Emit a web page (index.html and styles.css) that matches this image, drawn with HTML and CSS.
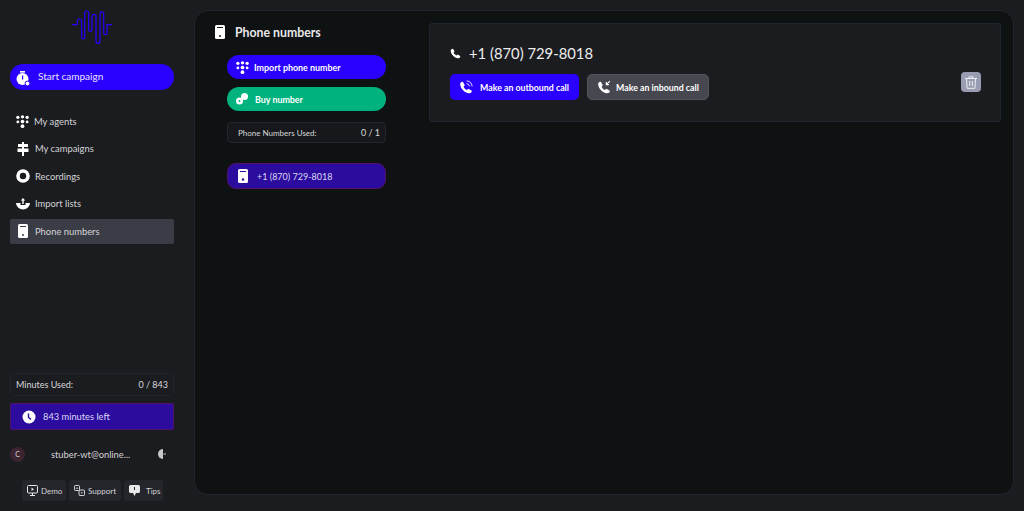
FILE: index.html
```html
<!DOCTYPE html>
<html lang="en">

<head>
    <meta charset="UTF-8">
    <title>Phone numbers</title>
    <link rel="stylesheet" href="styles.css">
</head>

<body>
    <aside class="sidebar">
        <div class="logo">
            <svg width="40" height="36" viewBox="0 0 40 36" fill="none" stroke="#2a00ff" stroke-width="1.2">
                <path d="M0 14.700H5.300V11.200a2.200 2.200 0 0 1 4.400 0V27.300a1.500 1.500 0 0 0 3 0V3a2 2 0 0 1 4 0V19.700a1.650 1.650 0 0 0 3.300 0V6.300a2 2 0 0 1 4 0V31.300a2 2 0 0 0 4 0V3.700a1.850 1.850 0 0 1 3.700 0V23a1.650 1.650 0 0 0 3.300 0V14.700H40"/>
            </svg>
        </div>

        <button class="start-btn">
            <svg width="14" height="15" viewBox="0 0 14 15" fill="#fff"><rect x="4" y="0" width="5" height="1.600"/><circle cx="6.500" cy="8" r="6"/><path d="M6 4.500h1.200v4H6z" fill="#2a00ff"/><circle cx="11.500" cy="12.500" r="2.400" stroke="#2a00ff"/></svg>
            <span>Start campaign</span>
        </button>

        <nav class="nav">
            <a class="nav-item">
                <svg width="13" height="13" viewBox="0 0 14 14" fill="#fff"><circle cx="2" cy="2.500" r="1.800"/><circle cx="7" cy="2" r="1.800"/><circle cx="12" cy="2.500" r="1.800"/><circle cx="2" cy="7.500" r="1.500"/><circle cx="7" cy="7" r="2"/><circle cx="12" cy="7.500" r="1.500"/><circle cx="7" cy="12" r="2"/></svg>
                <span>My agents</span>
            </a>
            <a class="nav-item">
                <svg width="14" height="14" viewBox="0 0 14 14" fill="#fff"><path d="M6 0h2v2h4v3H8v1.500h4.500v3.500H8v4H6v-4H1.500V6.500H6V5H2V2h4z"/></svg>
                <span>My campaigns</span>
            </a>
            <a class="nav-item">
                <svg width="14" height="14" viewBox="0 0 14 14" fill="none" stroke="#fff" stroke-width="3.600"><circle cx="7" cy="7" r="5"/></svg>
                <span>Recordings</span>
            </a>
            <a class="nav-item">
                <svg width="14" height="14" viewBox="0 0 14 14" fill="#fff"><path d="M0 6h4.500v2h5V6H14a7 6.500 0 0 1-14 0z"/><path d="M7 1 4.800 3.500H6.300V7h1.400V3.500h1.500z"/></svg>
                <span>Import lists</span>
            </a>
            <a class="nav-item active">
                <svg width="14" height="14" viewBox="0 0 14 14"><rect x="2" y="0" width="10" height="14" rx="1.500" fill="#fff"/><rect x="4" y="2" width="6" height="1" fill="#3a3c46"/><circle cx="7" cy="11" r="1" fill="#3a3c46"/></svg>
                <span>Phone numbers</span>
            </a>
        </nav>

        <div class="side-bottom">
            <div class="used-box">
                <span>Minutes Used:</span>
                <span>0 / 843</span>
            </div>
            <div class="left-box">
                <svg width="14" height="14" viewBox="0 0 14 14"><circle cx="7" cy="7" r="6.500" fill="#fff"/><path d="M6.500 3.500V7.500L9 9.500" fill="none" stroke="#2b0c9e" stroke-width="1.400"/></svg>
                <span>843 minutes left</span>
            </div>
            <div class="user-row">
                <span class="avatar">C</span>
                <span class="email">stuber-wt@online...</span>
                <svg width="8" height="10" viewBox="0 0 8 10" fill="#c8c8cc"><path d="M5 0v10A5 5 0 0 1 5 0z"/><rect x="5.500" y="4.500" width="2.500" height="1"/></svg>
            </div>
            <div class="help-row">
                <a class="help-btn help-demo">
                    <svg width="11" height="11" viewBox="0 0 11 11" fill="none" stroke="#e8e8e8"><rect x=".5" y=".5" width="10" height="7.500" rx="1"/><path d="M3 10.500h5M5.500 8v2.500"/><path d="M4.500 2.500l2.500 1.700-2.500 1.700z" fill="#e8e8e8" stroke="none"/></svg>
                    <span>Demo</span>
                </a>
                <a class="help-btn help-support">
                    <svg width="11" height="11" viewBox="0 0 12 12" fill="none" stroke="#e8e8e8"><rect x=".5" y=".5" width="5.500" height="5.500" rx="1"/><rect x="5.500" y="5.500" width="6" height="6" rx="1"/><path d="M7.500 8.500h2M2 3.500h2.500"/></svg>
                    <span>Support</span>
                </a>
                <a class="help-btn help-tips">
                    <svg width="11" height="11" viewBox="0 0 11 11" fill="#e8e8e8"><path d="M1.500 0h8A1.500 1.500 0 0 1 11 1.500v5A1.500 1.500 0 0 1 9.500 8H7l-1.500 3L4 8H1.500A1.500 1.500 0 0 1 0 6.500v-5A1.500 1.500 0 0 1 1.500 0z"/><rect x="5" y="2" width="1" height="3" fill="#25262b"/></svg>
                    <span>Tips</span>
                </a>
            </div>
        </div>
    </aside>

    <main class="panel">
        <section class="numbers">
            <h1 class="numbers-title">
                <svg width="12" height="14" viewBox="0 0 12 14"><rect x="1" y="0" width="10" height="14" rx="1.500" fill="#fff"/><rect x="3" y="2" width="6" height="1" fill="#101213"/><circle cx="6" cy="11" r="1" fill="#101213"/></svg>
                <span>Phone numbers</span>
            </h1>
            <div class="numbers-list">
                <button class="pill pill-blue">
                    <svg width="13" height="13" viewBox="0 0 14 14" fill="#fff"><circle cx="2" cy="2.500" r="1.800"/><circle cx="7" cy="2" r="1.800"/><circle cx="12" cy="2.500" r="1.800"/><circle cx="2" cy="7.500" r="1.500"/><circle cx="7" cy="7" r="2"/><circle cx="12" cy="7.500" r="1.500"/><circle cx="7" cy="12" r="2"/></svg>
                    <span>Import phone number</span>
                </button>
                <button class="pill pill-green">
                    <svg width="12" height="12" viewBox="0 0 12 12" fill="#fff"><circle cx="3.500" cy="8" r="3.500"/><circle cx="8.500" cy="3.500" r="3.500"/><circle cx="3.500" cy="8" r="1" fill="#00b37e"/></svg>
                    <span>Buy number</span>
                </button>
                <div class="numbers-used">
                    <span>Phone Numbers Used:</span>
                    <span class="numbers-count">0 / 1</span>
                </div>
                <a class="number-item">
                    <svg width="12" height="14" viewBox="0 0 12 14"><rect x="1" y="0" width="10" height="14" rx="1.500" fill="#fff"/><rect x="3" y="2" width="6" height="1" fill="#2b0c9e"/><circle cx="6" cy="10.500" r="1.200" fill="#2b0c9e"/></svg>
                    <span>+1 (870) 729-8018</span>
                </a>
            </div>
        </section>

        <section class="detail">
            <div class="detail-main">
                <h2 class="detail-number">
                    <svg width="11" height="11" viewBox="0 0 24 24" fill="#fff"><path d="M6.600 1.500 10 7.500 7.800 10c1.200 2.700 3.500 5 6.200 6.200l2.500-2.200 6 3.400c.3 2.600-2 5.600-5 5.100C9.500 21.500 2.500 14.500 1.500 6.500 1 3.500 4 1.200 6.600 1.500z"/></svg>
                    <span>+1 (870) 729-8018</span>
                </h2>
                <div class="detail-actions">
                    <button class="call-btn call-out">
                        <svg width="14" height="14" viewBox="0 0 24 24" fill="#fff"><path d="M6.600 3 10 9 7.800 11.500c1.200 2.700 3 4.500 5.700 5.700L16 15l6 3.400c.3 2.600-2 4.600-5 4.100C9.500 21.500 3 15 2 7.500 1.500 4.500 4 2.700 6.600 3z"/><path d="M13 6a6 6 0 0 1 5 5M13 1.500A10.500 10.500 0 0 1 22.500 11" fill="none" stroke="#fff" stroke-width="1.500"/></svg>
                        <span>Make an outbound call</span>
                    </button>
                    <button class="call-btn call-in">
                        <svg width="14" height="14" viewBox="0 0 24 24" fill="#fff"><path d="M6.600 3 10 9 7.800 11.500c1.200 2.700 3 4.500 5.700 5.700L16 15l6 3.400c.3 2.600-2 4.600-5 4.100C9.500 21.500 3 15 2 7.500 1.500 4.500 4 2.700 6.600 3z"/><path d="M22 2l-6 6M16 3.500V8h4.500" fill="none" stroke="#fff" stroke-width="2"/></svg>
                        <span>Make an inbound call</span>
                    </button>
                </div>
            </div>
            <button class="trash-btn">
                <svg width="12" height="13" viewBox="0 0 12 13" fill="none" stroke="#eceef2"><path d="M0 2.500h12M4 2.500V.8h4v1.700M1.500 2.500l.6 9.800h7.800l.6-9.800M4.700 5v5M7.300 5v5"/></svg>
            </button>
        </section>
    </main>
</body>

</html>
```

FILE: styles.css
```css
* {
    box-sizing: border-box;
}

body {
    font-family: 'Lato', 'Liberation Sans', sans-serif;
    background-color: #1b1c20;
    color: #e6e6e8;
    display: flex;
    height: 511px;
    margin: 0;
    overflow: hidden;
}

svg {
    flex-shrink: 0;
}

button {
    font-family: inherit;
    border: none;
    color: #fff;
}

/* sidebar */
.sidebar {
    width: 184px;
    height: 511px;
    padding: 10px 10px 10px;
    display: flex;
    flex-direction: column;
    margin-right: 10px;
}

.logo {
    height: 36px;
    display: flex;
    justify-content: center;
}

.start-btn {
    margin-top: 18px;
    height: 26px;
    background-color: #2a00ff;
    border-radius: 13px;
    padding: 0 0 0 6px;
    display: flex;
    align-items: center;
    gap: 8px;
    font-size: 10px;
    color: #e8e4ff;
}

.start-btn span {
    margin-bottom: 2px;
}

.start-btn svg {
    margin-top: 2px;
}

.nav {
    margin-top: 19px;
    display: flex;
    flex-direction: column;
    gap: 2.400px;
}

.nav-item {
    height: 25px;
    padding: 0 6px;
    display: flex;
    align-items: center;
    gap: 5px;
    font-size: 9.400px;
    color: #d4d4d6;
    border-radius: 2px;
}

.nav-item.active {
    background-color: #3a3c46;
}

.side-bottom {
    margin-top: auto;
    display: flex;
    flex-direction: column;
}

.used-box {
    height: 23px;
    padding: 0 5px;
    border: 1px solid #20252f;
    border-radius: 5px;
    display: flex;
    justify-content: space-between;
    align-items: center;
    font-size: 9px;
    color: #d8d8da;
}

.left-box {
    margin-top: 7px;
    height: 27px;
    padding: 0 11px 0 11px;
    background-color: #2b0c9e;
    border: 1px solid #551068;
    border-radius: 2px;
    display: flex;
    align-items: center;
    gap: 7px;
    font-size: 9.300px;
    color: #dcd8f4;
}

.user-row {
    margin-top: 16px;
    height: 16px;
    display: flex;
    align-items: center;
    font-size: 9.300px;
    color: #d4d4d6;
}

.avatar {
    width: 15px;
    height: 15px;
    border-radius: 50%;
    background-color: #3c2530;
    display: flex;
    align-items: center;
    justify-content: center;
    font-size: 7px;
}

.email {
    margin-left: 26px;
    width: 107px;
}

.help-row {
    margin-top: 18px;
    padding-left: 12px;
    display: flex;
    gap: 3px;
}

.help-btn {
    height: 21px;
    padding-left: 5px;
    background-color: #25262b;
    border-radius: 3px;
    display: flex;
    align-items: center;
    gap: 3px;
    font-size: 8px;
    color: #d4d4d6;
}

.help-demo {
    width: 44px;
}

.help-support {
    width: 52px;
}

.help-tips {
    width: 39px;
    gap: 6px;
}

/* main panel */
.panel {
    width: 820px;
    height: 485px;
    margin-top: 10px;
    padding: 12px 12px 0 0;
    background-color: #0f1213;
    border: 1px solid #20252f;
    border-radius: 14px;
    display: flex;
    align-items: flex-start;
}

.numbers {
    width: 234px;
    flex-shrink: 0;
    padding-top: 1px;
}

.numbers-title {
    margin: 0 0 0 19px;
    height: 16px;
    display: flex;
    align-items: center;
    gap: 9px;
    font-size: 12.300px;
    font-weight: 700;
    color: #e8e8ea;
}

.numbers-list {
    margin: 15px 0 0 32px;
    width: 159px;
    display: flex;
    flex-direction: column;
}

.pill {
    height: 24px;
    border-radius: 12px;
    padding: 0 0 0 9px;
    display: flex;
    align-items: center;
    gap: 5px;
    font-size: 8.900px;
    font-weight: 700;
}

.pill-blue {
    background-color: #2a00ff;
}

.pill-green {
    margin-top: 8px;
    background-color: #00b37e;
    gap: 7px;
}

.numbers-used {
    margin-top: 11px;
    height: 21px;
    padding: 0 5px 0 10px;
    border: 1px solid #20252f;
    border-radius: 4px;
    background-color: #17181c;
    display: flex;
    justify-content: space-between;
    align-items: center;
    font-size: 8px;
    color: #d8d8da;
}

.numbers-count {
    font-size: 9px;
}

.number-item {
    margin-top: 20px;
    height: 26px;
    padding: 0 0 0 9px;
    background-color: #2b0c9e;
    border: 1px solid #551068;
    border-radius: 9px;
    display: flex;
    align-items: center;
    gap: 8px;
    font-size: 9px;
    color: #dcd8f4;
}

.detail {
    flex: 1;
    height: 99px;
    padding: 20px 19px 0 20px;
    background-color: #1b1c20;
    border: 1px solid #20252f;
    border-radius: 3px;
    display: flex;
    justify-content: space-between;
}

.detail-number {
    margin: 0;
    height: 18px;
    display: flex;
    align-items: center;
    gap: 8px;
    font-size: 14.800px;
    font-weight: 400;
    color: #eeeeee;
}

.detail-actions {
    margin-top: 12px;
    display: flex;
    gap: 8px;
}

.call-btn {
    height: 26px;
    border-radius: 5px;
    padding: 0 0 0 9px;
    display: flex;
    align-items: center;
    gap: 7px;
    font-size: 8.800px;
    font-weight: 700;
}

.call-out {
    width: 129px;
    background-color: #2a00ff;
}

.call-in {
    width: 122px;
    background-color: #46474f;
    border: 1px solid #52535b;
    gap: 5px;
}

.trash-btn {
    margin-top: 28px;
    width: 20px;
    height: 20px;
    padding: 0;
    border-radius: 4px;
    background-color: #9a9db2;
    display: flex;
    align-items: center;
    justify-content: center;
}
```
